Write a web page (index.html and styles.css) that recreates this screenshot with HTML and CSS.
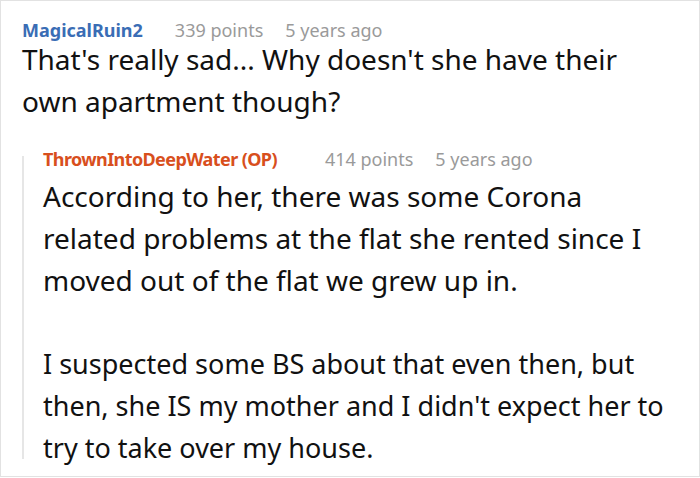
FILE: index.html
```html
<!DOCTYPE html>
<html lang="en">

<head>
    <meta charset="UTF-8">
    <meta name="viewport" content="width=device-width, initial-scale=1.0">
    <title>Comment thread</title>
    <link rel="stylesheet" href="styles.css">
</head>

<body>
    <div class="thread">
        <div class="comment">
            <div class="meta">
                <span class="author">MagicalRuin2</span>
                <span class="info">339 points</span>
                <span class="info">5 years ago</span>
            </div>
            <p class="text">That's really sad... Why doesn't she have their own apartment though?</p>

            <div class="reply">
                <div class="meta">
                    <span class="author op">ThrownIntoDeepWater (OP)</span>
                    <span class="info">414 points</span>
                    <span class="info">5 years ago</span>
                </div>
                <p class="text">According to her, there was some Corona related problems at the flat she rented since I moved out of the flat we grew up in.</p>
                <p class="text">I suspected some BS about that even then, but then, she IS my mother and I didn't expect her to try to take over my house.</p>
            </div>
        </div>
    </div>
</body>

</html>
```

FILE: styles.css
```css
body {
    margin: 0;
    font-family: "Noto Sans", "Open Sans", sans-serif;
    background-color: #ffffff;
}

.thread {
    width: 700px;
    height: 477px;
    box-sizing: border-box;
    border: 1px solid #e2e2e2;
    overflow: hidden;
}

.comment {
    padding: 21px 0 0 21px;
}

.meta {
    display: flex;
    gap: 22px;
    font-size: 18px;
    line-height: 16px;
    white-space: nowrap;
}

.author {
    color: #3a6db5;
    font-weight: bold;
    margin-right: 10px;
}

.author.op {
    color: #d84f1d;
    letter-spacing: -0.6px;
    margin-right: 26px;
}

.info {
    color: #9a9a9a;
}

.text {
    margin: 0;
    font-size: 28px;
    line-height: 42px;
    color: #111111;
    padding-right: 60px;
}

.reply {
    display: flow-root;
    margin-top: 34px;
    border-left: 2px solid #e6e6e6;
    padding-left: 19px;
}

.reply .meta {
    margin-top: -5px;
    margin-bottom: 8px;
}

.reply .text {
    padding-right: 19px;
}

.reply .text + .text {
    font-size: 27px;
    padding-right: 0;
    margin-top: 42px;
    margin-bottom: -10px;
}
```
